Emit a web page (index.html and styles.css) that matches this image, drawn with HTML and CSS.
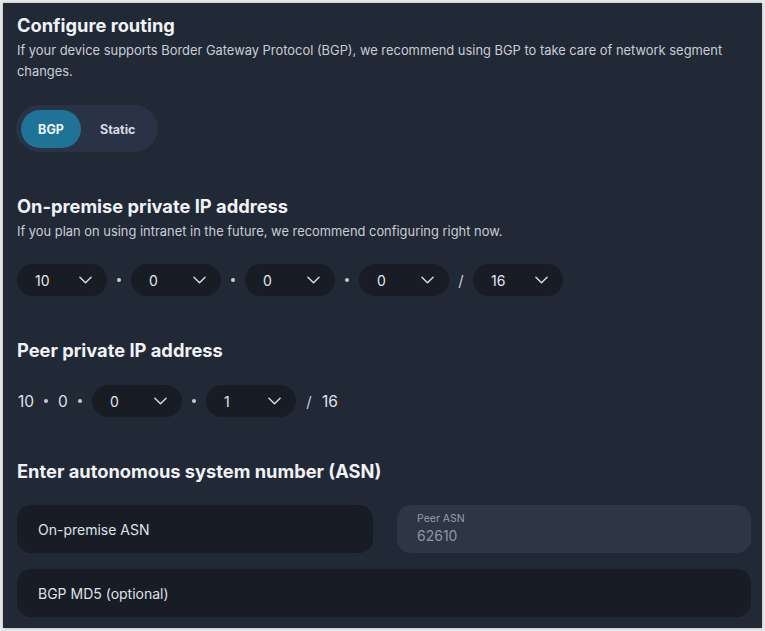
FILE: index.html
```html
<!DOCTYPE html>
<html lang="en">
<head>
    <meta charset="UTF-8">
    <meta name="viewport" content="width=device-width, initial-scale=1.0">
    <title>Configure routing</title>
    <link rel="stylesheet" href="styles.css">
</head>
<body>
<div class="panel">
    <section class="section">
        <h2>Configure routing</h2>
        <p class="hint">If your device supports Border Gateway Protocol (BGP), we recommend using BGP to take care of network segment changes.</p>
        <div class="toggle">
            <button class="toggle-item active">BGP</button>
            <button class="toggle-item">Static</button>
        </div>
    </section>

    <section class="section">
        <h2>On-premise private IP address</h2>
        <p class="hint">If you plan on using intranet in the future, we recommend configuring right now.</p>
        <div class="ip-row">
            <div class="ip-select"><span>10</span><svg class="chev" viewBox="0 0 14 8"><path d="M1 1l6 6 6-6"/></svg></div>
            <span class="dot"></span>
            <div class="ip-select"><span>0</span><svg class="chev" viewBox="0 0 14 8"><path d="M1 1l6 6 6-6"/></svg></div>
            <span class="dot"></span>
            <div class="ip-select"><span>0</span><svg class="chev" viewBox="0 0 14 8"><path d="M1 1l6 6 6-6"/></svg></div>
            <span class="dot"></span>
            <div class="ip-select"><span>0</span><svg class="chev" viewBox="0 0 14 8"><path d="M1 1l6 6 6-6"/></svg></div>
            <span class="slash">/</span>
            <div class="ip-select"><span>16</span><svg class="chev" viewBox="0 0 14 8"><path d="M1 1l6 6 6-6"/></svg></div>
        </div>
    </section>

    <section class="section">
        <h2>Peer private IP address</h2>
        <div class="ip-row peer">
            <span class="ip-text">10</span>
            <span class="dot"></span>
            <span class="ip-text">0</span>
            <span class="dot"></span>
            <div class="ip-select"><span>0</span><svg class="chev" viewBox="0 0 14 8"><path d="M1 1l6 6 6-6"/></svg></div>
            <span class="dot"></span>
            <div class="ip-select"><span>1</span><svg class="chev" viewBox="0 0 14 8"><path d="M1 1l6 6 6-6"/></svg></div>
            <span class="slash">/</span>
            <span class="ip-text">16</span>
        </div>
    </section>

    <section class="section last">
        <h2>Enter autonomous system number (ASN)</h2>
        <div class="asn-grid">
            <div class="field"><span class="placeholder">On-premise ASN</span></div>
            <div class="field disabled">
                <span class="field-label">Peer ASN</span>
                <span class="field-value">62610</span>
            </div>
            <div class="field wide"><span class="placeholder">BGP MD5 (optional)</span></div>
        </div>
    </section>
</div>
</body>
</html>
```

FILE: styles.css
```css
body {
    margin: 0;
    background-color: #e9eaec;
    font-family: "Inter", "Open Sans", sans-serif;
    color: #e8eaee;
}
.panel {
    margin: 3px;
    width: 759px;
    height: 625px;
    box-sizing: border-box;
    background-color: #212836;
    padding: 10px 12px 0 14px;
    box-shadow: 0 0 3px rgba(0,0,0,0.25);
}
.section {
    margin-bottom: 42px;
}
.section h2 {
    margin: 0;
    font-size: 18.3px;
    font-weight: 700;
    line-height: 24px;
    color: #f1f2f5;
}
.hint {
    margin: 3px 0 0 0;
    font-size: 12.9px;
    line-height: 21px;
    color: #c9cdd5;
}
.toggle {
    display: inline-flex;
    margin-top: 23px;
    margin-left: -1px;
    padding: 5px 5px 4px 5px;
    background-color: #2a3245;
    border-radius: 24px;
}
.toggle-item {
    height: 38px;
    padding: 0 18px 0 19px;
    border: none;
    border-radius: 19px;
    background: transparent;
    color: #d7dbe3;
    font-family: inherit;
    font-size: 12.5px;
    font-weight: 700;
    cursor: pointer;
}
.toggle-item.active {
    background-color: #1f7397;
    color: #eef4f8;
    width: 60px;
    padding: 0;
}
.ip-row {
    display: flex;
    align-items: center;
    gap: 9px;
    margin-top: 22px;
}
.ip-row.peer {
    margin-top: 23px;
    gap: 10px;
}
.ip-select {
    display: flex;
    align-items: center;
    justify-content: space-between;
    width: 90px;
    height: 32px;
    box-sizing: border-box;
    padding: 0 15px 0 18px;
    background-color: #181c25;
    border-radius: 16px;
    font-size: 14px;
    color: #e3e6ec;
}
.chev {
    width: 13px;
    height: 8px;
    fill: none;
    stroke: #d5d9e0;
    stroke-width: 1.6;
    stroke-linecap: round;
    stroke-linejoin: round;
}
.dot {
    width: 4px;
    height: 4px;
    margin: 0 1px;
    border-radius: 50%;
    background-color: #c9cdd5;
}
.peer .dot {
    margin: 0;
}
.slash {
    width: 6px;
    text-align: center;
    font-size: 15px;
    color: #c9cdd5;
}
.ip-text {
    font-size: 15.5px;
    color: #dfe2e8;
}
.peer .ip-text:first-child {
    margin-left: 1px;
}
.asn-grid {
    display: grid;
    grid-template-columns: 356px 354px;
    column-gap: 24px;
    row-gap: 16px;
    margin-top: 22px;
}
.field {
    height: 48px;
    box-sizing: border-box;
    padding: 0 20px 0 21px;
    display: flex;
    flex-direction: column;
    justify-content: center;
    background-color: #181c25;
    border-radius: 14px;
}
.field.wide {
    grid-column: 1 / 3;
}
.field.disabled {
    background-color: #2e3545;
    padding-left: 20px;
}
.placeholder {
    font-size: 14px;
    color: #dfe2e8;
}
.field-label {
    font-size: 10.5px;
    line-height: 14px;
    color: #969cab;
}
.field-value {
    font-size: 14px;
    line-height: 20px;
    color: #8f95a3;
}
```
